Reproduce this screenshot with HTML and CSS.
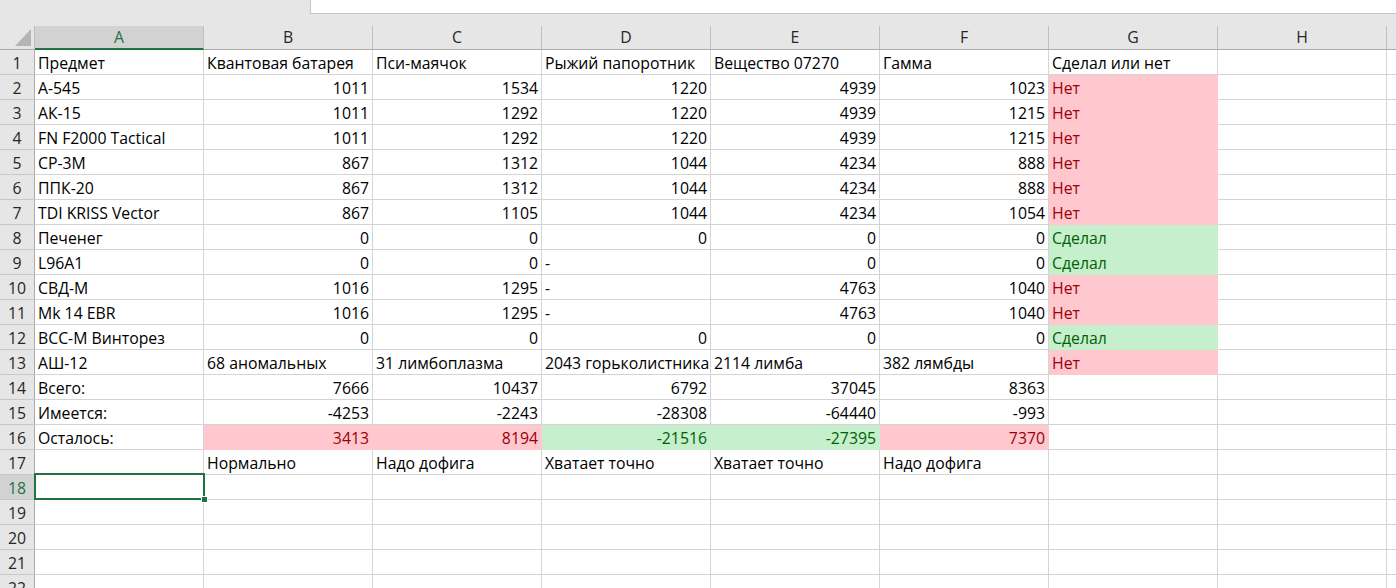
FILE: index.html
```html
<!DOCTYPE html>
<html lang="ru">
<head>
<meta charset="utf-8">
<title>Sheet</title>
<link rel="stylesheet" href="styles.css">
</head>
<body>
<div class="topbar"><div class="spacer"></div><div class="fx"></div></div>
<div class="sheet">
  <div class="corner"><svg width="35" height="24" viewBox="0 0 35 24"><polygon points="31,3 31,20 15,20" fill="#b4b4b4"/></svg></div>
  <div class="ch sel">A</div><div class="ch">B</div><div class="ch">C</div><div class="ch">D</div><div class="ch">E</div><div class="ch">F</div><div class="ch">G</div><div class="ch">H</div><div class="ch last"></div>

  <div class="rh">1</div><div class="c">Предмет</div><div class="c">Квантовая батарея</div><div class="c">Пси-маячок</div><div class="c">Рыжий папоротник</div><div class="c">Вещество 07270</div><div class="c">Гамма</div><div class="c">Сделал или нет</div><div class="c"></div><div class="c last"></div>

  <div class="rh">2</div><div class="c">А-545</div><div class="c n">1011</div><div class="c n">1534</div><div class="c n">1220</div><div class="c n">4939</div><div class="c n">1023</div><div class="c bad">Нет</div><div class="c"></div><div class="c last"></div>

  <div class="rh">3</div><div class="c">АК-15</div><div class="c n">1011</div><div class="c n">1292</div><div class="c n">1220</div><div class="c n">4939</div><div class="c n">1215</div><div class="c bad">Нет</div><div class="c"></div><div class="c last"></div>

  <div class="rh">4</div><div class="c">FN F2000 Tactical</div><div class="c n">1011</div><div class="c n">1292</div><div class="c n">1220</div><div class="c n">4939</div><div class="c n">1215</div><div class="c bad">Нет</div><div class="c"></div><div class="c last"></div>

  <div class="rh">5</div><div class="c">СР-3М</div><div class="c n">867</div><div class="c n">1312</div><div class="c n">1044</div><div class="c n">4234</div><div class="c n">888</div><div class="c bad">Нет</div><div class="c"></div><div class="c last"></div>

  <div class="rh">6</div><div class="c">ППК-20</div><div class="c n">867</div><div class="c n">1312</div><div class="c n">1044</div><div class="c n">4234</div><div class="c n">888</div><div class="c bad">Нет</div><div class="c"></div><div class="c last"></div>

  <div class="rh">7</div><div class="c">TDI KRISS Vector</div><div class="c n">867</div><div class="c n">1105</div><div class="c n">1044</div><div class="c n">4234</div><div class="c n">1054</div><div class="c bad">Нет</div><div class="c"></div><div class="c last"></div>

  <div class="rh">8</div><div class="c">Печенег</div><div class="c n">0</div><div class="c n">0</div><div class="c n">0</div><div class="c n">0</div><div class="c n">0</div><div class="c good">Сделал</div><div class="c"></div><div class="c last"></div>

  <div class="rh">9</div><div class="c">L96A1</div><div class="c n">0</div><div class="c n">0</div><div class="c">-</div><div class="c n">0</div><div class="c n">0</div><div class="c good">Сделал</div><div class="c"></div><div class="c last"></div>

  <div class="rh">10</div><div class="c">СВД-М</div><div class="c n">1016</div><div class="c n">1295</div><div class="c">-</div><div class="c n">4763</div><div class="c n">1040</div><div class="c bad">Нет</div><div class="c"></div><div class="c last"></div>

  <div class="rh">11</div><div class="c">Mk 14 EBR</div><div class="c n">1016</div><div class="c n">1295</div><div class="c">-</div><div class="c n">4763</div><div class="c n">1040</div><div class="c bad">Нет</div><div class="c"></div><div class="c last"></div>

  <div class="rh">12</div><div class="c">ВСС-М Винторез</div><div class="c n">0</div><div class="c n">0</div><div class="c n">0</div><div class="c n">0</div><div class="c n">0</div><div class="c good">Сделал</div><div class="c"></div><div class="c last"></div>

  <div class="rh">13</div><div class="c">АШ-12</div><div class="c">68 аномальных</div><div class="c">31 лимбоплазма</div><div class="c">2043 горьколистника</div><div class="c">2114 лимба</div><div class="c">382 лямбды</div><div class="c bad">Нет</div><div class="c"></div><div class="c last"></div>

  <div class="rh">14</div><div class="c">Всего:</div><div class="c n">7666</div><div class="c n">10437</div><div class="c n">6792</div><div class="c n">37045</div><div class="c n">8363</div><div class="c"></div><div class="c"></div><div class="c last"></div>

  <div class="rh">15</div><div class="c">Имеется:</div><div class="c n">-4253</div><div class="c n">-2243</div><div class="c n">-28308</div><div class="c n">-64440</div><div class="c n">-993</div><div class="c"></div><div class="c"></div><div class="c last"></div>

  <div class="rh">16</div><div class="c">Осталось:</div><div class="c n bad">3413</div><div class="c n bad">8194</div><div class="c n good">-21516</div><div class="c n good">-27395</div><div class="c n bad">7370</div><div class="c"></div><div class="c"></div><div class="c last"></div>

  <div class="rh">17</div><div class="c"></div><div class="c">Нормально</div><div class="c">Надо дофига</div><div class="c">Хватает точно</div><div class="c">Хватает точно</div><div class="c">Надо дофига</div><div class="c"></div><div class="c"></div><div class="c last"></div>

  <div class="rh active">18</div><div class="c active-cell"><span class="selbox"></span><span class="handle"></span></div><div class="c"></div><div class="c"></div><div class="c"></div><div class="c"></div><div class="c"></div><div class="c"></div><div class="c"></div><div class="c last"></div>

  <div class="rh">19</div><div class="c"></div><div class="c"></div><div class="c"></div><div class="c"></div><div class="c"></div><div class="c"></div><div class="c"></div><div class="c"></div><div class="c last"></div>

  <div class="rh">20</div><div class="c"></div><div class="c"></div><div class="c"></div><div class="c"></div><div class="c"></div><div class="c"></div><div class="c"></div><div class="c"></div><div class="c last"></div>

  <div class="rh">21</div><div class="c"></div><div class="c"></div><div class="c"></div><div class="c"></div><div class="c"></div><div class="c"></div><div class="c"></div><div class="c"></div><div class="c last"></div>

  <div class="rh">22</div><div class="c"></div><div class="c"></div><div class="c"></div><div class="c"></div><div class="c"></div><div class="c"></div><div class="c"></div><div class="c"></div><div class="c last"></div>
</div>
</body>
</html>
```

FILE: styles.css
```css
html, body {
  margin: 0;
  padding: 0;
  background: #ffffff;
  overflow: hidden;
}
body {
  font-family: "Open Sans", "Noto Sans", sans-serif;
  font-size: 15.8px;
  color: #000000;
  width: 1396px;
  height: 588px;
}
.topbar {
  height: 26px;
  background: #e6e6e6;
  display: flex;
}
.spacer {
  width: 310px;
}
.fx {
  flex: 1;
  height: 14px;
  background: #ffffff;
  border-left: 1px solid #c6c6c6;
  border-bottom: 1px solid #c6c6c6;
  box-sizing: border-box;
}
.sheet {
  display: grid;
  grid-template-columns: 35px repeat(8, 169px) 1fr;
  grid-template-rows: 24px;
  grid-auto-rows: 25px;
}
.sheet > div {
  box-sizing: border-box;
  white-space: nowrap;
}
.corner {
  background: #e6e6e6;
  border-bottom: 1px solid #ababab;
  border-right: 1px solid #bfbfbf;
}
.corner svg {
  display: block;
}
.ch {
  background: #e6e6e6;
  border-right: 1px solid #bfbfbf;
  border-bottom: 1px solid #ababab;
  text-align: center;
  line-height: 23px;
  color: #262626;
}
.ch.sel {
  background: #d2d2d2;
  color: #217346;
  border-bottom: 2px solid #217346;
  line-height: 22px;
}
.ch.last {
  border-right: none;
}
.rh {
  background: #e6e6e6;
  border-right: 1px solid #ababab;
  border-bottom: 1px solid #c8c8c8;
  text-align: center;
  padding-top: 1px;
  line-height: 24px;
  color: #262626;
}
.rh.active {
  background: #d2d2d2;
  color: #217346;
}
.c {
  border-right: 1px solid #d4d4d4;
  border-bottom: 1px solid #d4d4d4;
  padding: 1px 3px 0 3px;
  line-height: 24px;
  overflow: visible;
}
.c.last {
  border-right: none;
}
.n {
  text-align: right;
}
.bad {
  background: #ffc7ce;
  color: #9c0006;
  border-right-color: transparent;
  border-bottom-color: transparent;
}
.good {
  background: #c6efce;
  color: #006100;
  border-right-color: transparent;
  border-bottom-color: transparent;
}
.active-cell {
  position: relative;
}
.selbox {
  position: absolute;
  left: -1px;
  top: -2px;
  right: -2px;
  bottom: -1px;
  border: 2px solid #217346;
}
.handle {
  position: absolute;
  right: -5px;
  bottom: -4px;
  width: 5px;
  height: 5px;
  background: #217346;
  border: 1px solid #ffffff;
}
```
